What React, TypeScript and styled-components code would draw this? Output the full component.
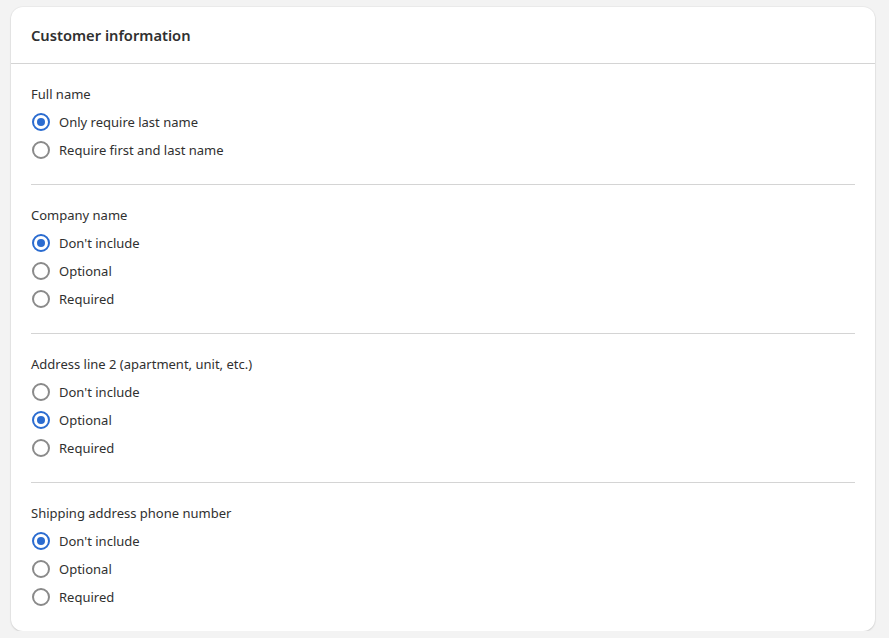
import { useState } from "react";
import styled, { createGlobalStyle } from "styled-components";

const Global = createGlobalStyle`
  html, body {
    margin: 0;
    background: #f3f3f3;
    font-family: "Segoe UI", "Noto Sans", "Open Sans", sans-serif;
    color: #303030;
  }
`;

const Card = styled.div`
  margin: 7px 0 0 11px;
  width: 864px;
  background: #fff;
  border-radius: 12px;
  box-shadow: 0 1px 2px rgba(0, 0, 0, 0.12), 0 0 0 1px rgba(0, 0, 0, 0.03);
  overflow: hidden;
`;

const Header = styled.div`
  height: 56px;
  display: flex;
  align-items: center;
  padding: 0 20px;
  border-bottom: 1px solid #d4d4d4;
`;

const Title = styled.h2`
  margin: 0;
  font-size: 14.7px;
  font-weight: 600;
  color: #303030;
`;

const Body = styled.div`
  padding: 0 20px;
`;

const Section = styled.fieldset`
  margin: 0;
  border: 0;
  padding: 20px 0;
  & + & {
    border-top: 1px solid #d4d4d4;
  }
`;

const Label = styled.div`
  font-size: 13px;
  line-height: 20px;
  margin-bottom: 4px;
`;

const Row = styled.label`
  display: flex;
  align-items: center;
  height: 28px;
  font-size: 13px;
  cursor: pointer;
`;

const Dot = styled.span<{ $on: boolean }>`
  box-sizing: border-box;
  width: 18px;
  height: 18px;
  margin: 0 9px 0 1px;
  border-radius: 50%;
  border: 2px solid ${(p) => (p.$on ? "#2b6cd0" : "#8a8a8a")};
  display: flex;
  align-items: center;
  justify-content: center;
  &::after {
    content: "";
    width: 8px;
    height: 8px;
    border-radius: 50%;
    background: ${(p) => (p.$on ? "#2b6cd0" : "transparent")};
  }
`;

const groups = [
  { label: "Full name", options: ["Only require last name", "Require first and last name"], sel: 0 },
  { label: "Company name", options: ["Don't include", "Optional", "Required"], sel: 0 },
  { label: "Address line 2 (apartment, unit, etc.)", options: ["Don't include", "Optional", "Required"], sel: 1 },
  { label: "Shipping address phone number", options: ["Don't include", "Optional", "Required"], sel: 0 },
];

export default function App() {
  const [picked, setPicked] = useState(groups.map((g) => g.sel));
  return (
    <>
      <Global />
      <Card>
        <Header>
          <Title>Customer information</Title>
        </Header>
        <Body>
          {groups.map((g, gi) => (
            <Section key={g.label}>
              <Label>{g.label}</Label>
              {g.options.map((o, oi) => (
                <Row
                  key={o}
                  onClick={() =>
                    setPicked((p) => p.map((v, i) => (i === gi ? oi : v)))
                  }
                >
                  <Dot $on={picked[gi] === oi} />
                  {o}
                </Row>
              ))}
            </Section>
          ))}
        </Body>
      </Card>
    </>
  );
}
